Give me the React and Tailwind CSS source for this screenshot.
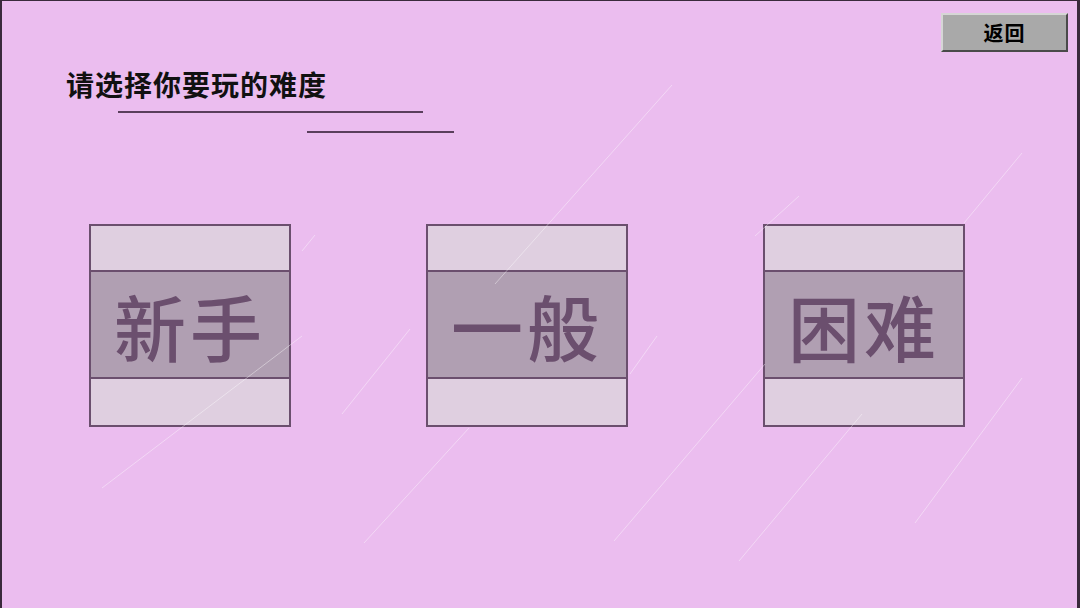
const LEVELS = ["新手", "一般", "困难"];

// faint diagonal streaks in the background
const STREAKS = [
  [670, 84, 493, 283],
  [1020, 152, 962, 222],
  [797, 195, 753, 235],
  [313, 234, 300, 250],
  [408, 328, 340, 413],
  [655, 335, 628, 373],
  [300, 335, 100, 487],
  [467, 427, 362, 542],
  [763, 363, 612, 540],
  [860, 413, 737, 560],
  [1020, 377, 913, 522],
];

function LevelCard({ label }) {
  return (
    <button className="flex flex-col w-[202px] h-[203px] border-2 border-[#6b4f6e] bg-[#dfcfe0] cursor-pointer">
      <div className="h-[44px] w-full" />
      <div className="flex-1 w-full flex items-center justify-center bg-[#b09fb2] border-y-2 border-[#6b4f6e]">
        <span className="text-[72px] leading-none font-medium text-[#6b4f6e] tracking-[4px] [font-family:'Noto_Sans_CJK_SC',sans-serif]">
          {label}
        </span>
      </div>
      <div className="h-[46px] w-full" />
    </button>
  );
}

export default function App() {
  return (
    <div className="relative w-[1080px] h-[608px] overflow-hidden bg-[#ebbdef] border-l-2 border-t border-r-[3px] border-[#3a2a3c] [font-family:'Noto_Sans_CJK_SC',sans-serif]">
      <svg className="absolute inset-0 pointer-events-none z-10" width="1080" height="608">
        {STREAKS.map(([x1, y1, x2, y2], i) => (
          <line key={i} x1={x1} y1={y1} x2={x2} y2={y2} stroke="#ffffff" strokeOpacity="0.4" strokeWidth="1" />
        ))}
      </svg>

      {/* ── Header ── */}
      <div className="flex justify-end pt-[12px] pr-[9px]">
        <button className="w-[127px] h-[39px] bg-[#a9a9a9] border-2 border-t-[#d6d6d6] border-l-[#d6d6d6] border-r-[#4a4a4a] border-b-[#4a4a4a] text-[20px] font-bold text-black leading-none tracking-[1px]">
          返回
        </button>
      </div>

      <h1 className="ml-[64px] mt-[14px] text-[28px] leading-[36px] font-bold text-[#111] tracking-[1px]">
        请选择你要玩的难度
      </h1>
      <div className="ml-[116px] mt-[9px] w-[305px] h-[2px] bg-[#5a3f5c]" />
      <div className="ml-[305px] mt-[18px] w-[147px] h-[2px] bg-[#5a3f5c]" />

      {/* ── Level cards ── */}
      <div className="flex gap-[135px] pl-[87px] mt-[91px]">
        {LEVELS.map((l) => (
          <LevelCard key={l} label={l} />
        ))}
      </div>
    </div>
  );
}
